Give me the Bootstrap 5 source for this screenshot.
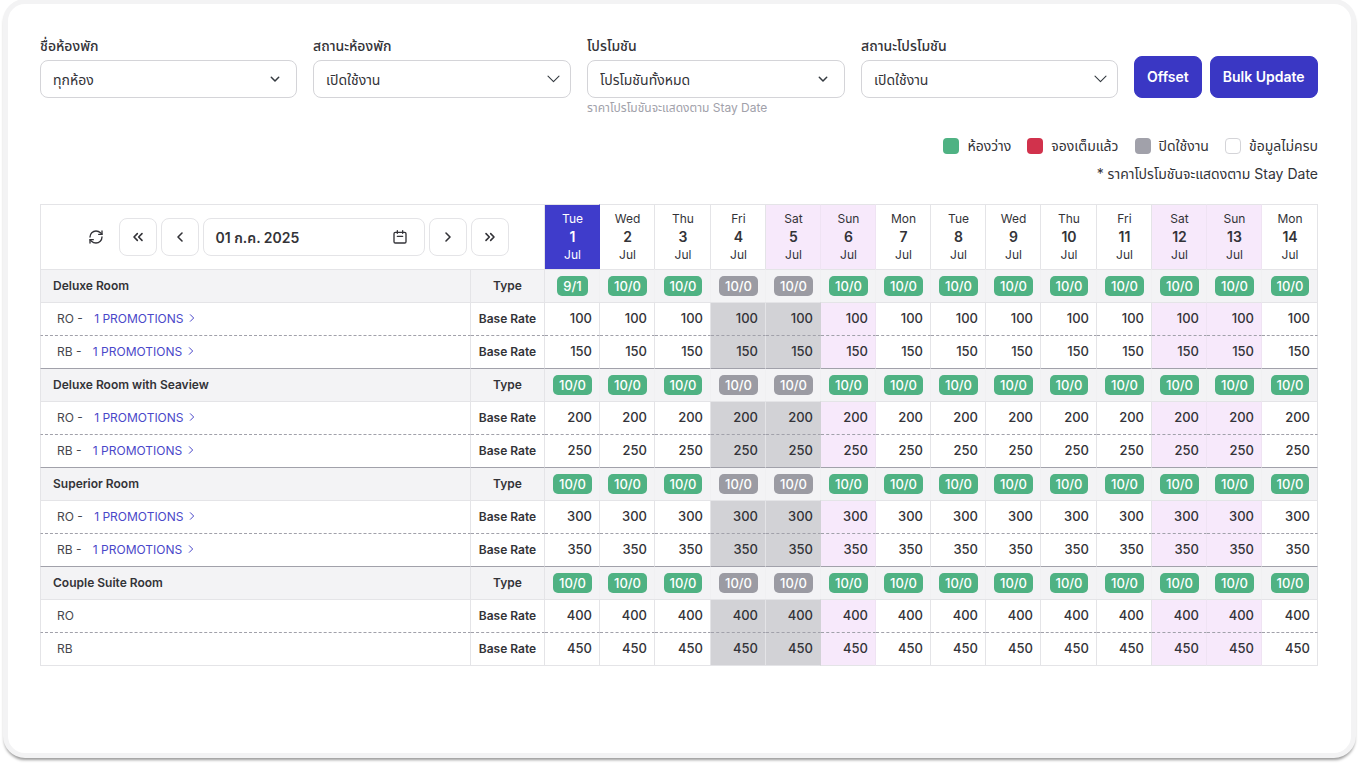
<!DOCTYPE html>
<html lang="th"><head><meta charset="utf-8"><title>Rate calendar</title>
<link rel="stylesheet" href="https://cdn.jsdelivr.net/npm/bootstrap@5.3.0/dist/css/bootstrap.min.css">
<style>
html,body{height:100%;background:#fff;overflow:hidden}
body{font-family:Inter,"Noto Sans Thai","Noto Sans",sans-serif;color:#333338;padding:0 6px 8px 3px}
.frame-box{height:759px;margin-top:-1px;background:#fff;border:5px solid #f3f3f4;border-radius:22px;box-shadow:0 3px 3px -1px rgba(0,0,0,.4);padding:32px 33px 0 32px}
.filter-item{flex:0 0 258px;min-width:0}
.filter-narrow{flex-basis:257px}
.filter-label{font-size:14px;font-weight:500;line-height:20px;margin-bottom:4px;display:block}
.form-select.filter-sel{height:38px;border-radius:8px;border-color:#d4d4d8;font-size:14px;color:#333338;padding:0 30px 0 12px;background-image:url("data:image/svg+xml,%3csvg xmlns='http://www.w3.org/2000/svg' viewBox='0 0 13 8'%3e%3cpath fill='none' stroke='%23343a40' stroke-width='1.1' stroke-linecap='round' stroke-linejoin='round' d='M1 1.2l5.5 5.5 5.5-5.5'/%3e%3c/svg%3e");background-position:right 10px center;background-size:13px 8px}
.form-select.sel-bold{background-image:url("data:image/svg+xml,%3csvg xmlns='http://www.w3.org/2000/svg' viewBox='0 0 12 8'%3e%3cpath fill='none' stroke='%23343a40' stroke-width='1.5' stroke-linecap='round' stroke-linejoin='round' d='M2.3 2.3l3.7 3.7 3.7-3.7'/%3e%3c/svg%3e");background-position:right 15px center;background-size:12px 8px}
.filter-hint{font-size:12px;color:#a1a1aa;line-height:20px}
.btn.act-btn{background:#3a37c4;border-color:#3a37c4;color:#fff;font-size:14px;font-weight:600;height:42px;border-radius:8px;padding:0 12px 2px;margin-top:20px;white-space:nowrap}
.legend-row{font-size:14px;line-height:20px;margin-top:18px}
.swatch{width:16px;height:16px;border-radius:4px;display:inline-block}
.swatch-green{background:#4fb283}
.swatch-red{background:#d1324c}
.swatch-grey{background:#a1a1aa}
.swatch-empty{border:1px solid #d4d4d8}
.note-line{font-size:14px;line-height:20px;margin:8px 0 20px}
.rate-tbl{width:1278px;table-layout:fixed;border-collapse:separate;border-spacing:0;margin:0;font-size:13px}
.cw-name{width:431px}.cw-type{width:74px}.cw-55{width:55px}.cw-56{width:56px}
.rate-tbl td,.rate-tbl th{border:0 solid #e4e4e7;border-width:1px 1px 0 0;padding:0;height:33px;vertical-align:middle;font-weight:500;background:#fff;color:#333338}
.rate-tbl tr>*:first-child{border-left-width:1px}
.rate-tbl tr:last-child>*{border-bottom-width:1px;height:34px}
.rate-tbl .head-ctl{height:65px;font-weight:400}
.ctl-btn{width:38px;height:38px;display:flex;align-items:center;justify-content:center;border:1px solid #e4e4e7;border-radius:8px;background:#fff;color:#333338;padding:0}
.ctl-plain{border-color:transparent}
.date-box{width:222px;height:38px;border:1px solid #e4e4e7;border-radius:8px;font-size:14px;font-weight:600;padding:0 16px 0 12px}
.rate-tbl .day-head{text-align:center;font-size:12px;line-height:16px;font-weight:400;height:65px;padding-left:1px}
.day-head b{display:block;font-size:14px;font-weight:600;line-height:20px}
.rate-tbl .day-today{background:#3f3ccb;color:#fff;border-right-color:#3f3ccb}
.rate-tbl .day-wknd{background:#f7e9fb;border-right-color:#efe3f3}
.rate-tbl .day-off{background:#d2d2d6}
.rate-tbl .day-off+.day-off{border-right-color:#d2d2d6}
.rate-tbl .grp-row>*{background:#f3f3f5;border-top-color:#a1a1aa}
.rate-tbl .grp-first>*{border-top-color:#e4e4e7}
.rate-tbl .grp-name{font-size:12px;font-weight:600;padding-left:12px}
.rate-tbl .type-cell{text-align:center;font-size:12px;font-weight:600}
.rate-tbl .grp-row .bdg-cell{text-align:center;border-right-color:#f0f0f2;padding-left:1px}
.rate-tbl .grp-row .bdg-cell:last-child{border-right-color:#e4e4e7}
.avail{display:inline-block;height:20px;line-height:20px;padding:0 6px;border-radius:5px;background:#4fb283;color:#fff;font-size:13px;font-weight:500}
.avail-off{background:#9b9ba3}
.rate-tbl .plan-name{font-size:12px;font-weight:400;padding-left:16px;color:#46464d}
.promo-lnk{color:#4a47c9;text-decoration:none;margin-left:8px}
.promo-lnk svg{vertical-align:0}
.rate-tbl .num{text-align:right;padding-right:7px}
.rate-tbl .dash-top>*{border-top:1px dashed #a1a1aa}
</style></head><body>
<div class="frame-box">
<div class="d-flex gap-3 align-items-start">
<div class="filter-item filter-narrow"><label class="filter-label">ชื่อห้องพัก</label><select class="form-select filter-sel sel-bold"><option>ทุกห้อง</option></select></div>
<div class="filter-item"><label class="filter-label">สถานะห้องพัก</label><select class="form-select filter-sel"><option>เปิดใช้งาน</option></select></div>
<div class="filter-item"><label class="filter-label">โปรโมชัน</label><select class="form-select filter-sel sel-bold"><option>โปรโมชันทั้งหมด</option></select><div class="filter-hint">ราคาโปรโมชันจะแสดงตาม Stay Date</div></div>
<div class="filter-item filter-narrow"><label class="filter-label">สถานะโปรโมชัน</label><select class="form-select filter-sel"><option>เปิดใช้งาน</option></select></div>
<div class="d-flex gap-2"><button class="btn act-btn">Offset</button><button class="btn act-btn">Bulk Update</button></div>
</div>
<div class="legend-row d-flex justify-content-end align-items-center">
<span class="swatch swatch-green me-2"></span><span class="me-3">ห้องว่าง</span>
<span class="swatch swatch-red me-2"></span><span class="me-3">จองเต็มแล้ว</span>
<span class="swatch swatch-grey me-2"></span><span class="me-3">ปิดใช้งาน</span>
<span class="swatch swatch-empty me-2"></span><span>ข้อมูลไม่ครบ</span>
</div>
<div class="note-line text-end">* ราคาโปรโมชันจะแสดงตาม Stay Date</div>
<table class="rate-tbl">
<colgroup><col class="cw-name"><col class="cw-type"><col class="cw-55"><col class="cw-55"><col class="cw-56"><col class="cw-55"><col class="cw-55"><col class="cw-55"><col class="cw-55"><col class="cw-55"><col class="cw-55"><col class="cw-56"><col class="cw-55"><col class="cw-55"><col class="cw-55"><col class="cw-56"></colgroup>
<tr>
<th colspan="2" class="head-ctl"><div class="d-flex justify-content-center align-items-center gap-1">
<button class="ctl-btn ctl-plain"><svg width="16" height="16" viewBox="0 0 24 24" fill="none" stroke="currentColor" stroke-width="2" stroke-linecap="round" stroke-linejoin="round"><path d="M3 12a9 9 0 0 1 9-9 9.75 9.75 0 0 1 6.74 2.74L21 8"/><path d="M21 3v5h-5"/><path d="M21 12a9 9 0 0 1-9 9 9.75 9.75 0 0 1-6.74-2.74L3 16"/><path d="M8 16H3v5"/></svg></button>
<button class="ctl-btn"><svg width="16" height="16" viewBox="0 0 24 24" fill="none" stroke="currentColor" stroke-width="2.4" stroke-linecap="round" stroke-linejoin="round"><path d="M11 17l-5-5 5-5"/><path d="M18 17l-5-5 5-5"/></svg></button>
<button class="ctl-btn"><svg width="16" height="16" viewBox="0 0 24 24" fill="none" stroke="currentColor" stroke-width="2.4" stroke-linecap="round" stroke-linejoin="round"><path d="M15 18l-6-6 6-6"/></svg></button>
<div class="date-box d-flex align-items-center justify-content-between"><span>01 ก.ค. 2025</span><svg width="16" height="16" viewBox="0 0 24 24" fill="none" stroke="currentColor" stroke-width="2" stroke-linecap="round" stroke-linejoin="round"><rect x="3" y="5" width="18" height="16" rx="2"/><path d="M8 2.5v4M16 2.5v4M8 11h8"/></svg></div>
<button class="ctl-btn"><svg width="16" height="16" viewBox="0 0 24 24" fill="none" stroke="currentColor" stroke-width="2.4" stroke-linecap="round" stroke-linejoin="round"><path d="M9 18l6-6-6-6"/></svg></button>
<button class="ctl-btn"><svg width="16" height="16" viewBox="0 0 24 24" fill="none" stroke="currentColor" stroke-width="2.4" stroke-linecap="round" stroke-linejoin="round"><path d="M6 17l5-5-5-5"/><path d="M13 17l5-5-5-5"/></svg></button>
</div></th>
<th class="day-head day-today">Tue<b>1</b>Jul</th><th class="day-head">Wed<b>2</b>Jul</th><th class="day-head">Thu<b>3</b>Jul</th><th class="day-head">Fri<b>4</b>Jul</th><th class="day-head day-wknd">Sat<b>5</b>Jul</th><th class="day-head day-wknd">Sun<b>6</b>Jul</th><th class="day-head">Mon<b>7</b>Jul</th><th class="day-head">Tue<b>8</b>Jul</th><th class="day-head">Wed<b>9</b>Jul</th><th class="day-head">Thu<b>10</b>Jul</th><th class="day-head">Fri<b>11</b>Jul</th><th class="day-head day-wknd">Sat<b>12</b>Jul</th><th class="day-head day-wknd">Sun<b>13</b>Jul</th><th class="day-head">Mon<b>14</b>Jul</th>
</tr>
<tr class="grp-row grp-first"><td class="grp-name">Deluxe Room</td><td class="type-cell">Type</td><td class="bdg-cell"><span class="avail">9/1</span></td><td class="bdg-cell"><span class="avail">10/0</span></td><td class="bdg-cell"><span class="avail">10/0</span></td><td class="bdg-cell"><span class="avail avail-off">10/0</span></td><td class="bdg-cell"><span class="avail avail-off">10/0</span></td><td class="bdg-cell"><span class="avail">10/0</span></td><td class="bdg-cell"><span class="avail">10/0</span></td><td class="bdg-cell"><span class="avail">10/0</span></td><td class="bdg-cell"><span class="avail">10/0</span></td><td class="bdg-cell"><span class="avail">10/0</span></td><td class="bdg-cell"><span class="avail">10/0</span></td><td class="bdg-cell"><span class="avail">10/0</span></td><td class="bdg-cell"><span class="avail">10/0</span></td><td class="bdg-cell"><span class="avail">10/0</span></td></tr>
<tr><td class="plan-name">RO - <a class="promo-lnk" href="#">1 PROMOTIONS <svg width="10" height="10" viewBox="0 0 24 24" fill="none" stroke="currentColor" stroke-width="2.4" stroke-linecap="round" stroke-linejoin="round"><path d="M8 20l8-8-8-8"/></svg></a></td><td class="type-cell">Base Rate</td><td class="num">100</td><td class="num">100</td><td class="num">100</td><td class="num day-off">100</td><td class="num day-off">100</td><td class="num day-wknd">100</td><td class="num">100</td><td class="num">100</td><td class="num">100</td><td class="num">100</td><td class="num">100</td><td class="num day-wknd">100</td><td class="num day-wknd">100</td><td class="num">100</td></tr>
<tr class="dash-top"><td class="plan-name">RB - <a class="promo-lnk" href="#">1 PROMOTIONS <svg width="10" height="10" viewBox="0 0 24 24" fill="none" stroke="currentColor" stroke-width="2.4" stroke-linecap="round" stroke-linejoin="round"><path d="M8 20l8-8-8-8"/></svg></a></td><td class="type-cell">Base Rate</td><td class="num">150</td><td class="num">150</td><td class="num">150</td><td class="num day-off">150</td><td class="num day-off">150</td><td class="num day-wknd">150</td><td class="num">150</td><td class="num">150</td><td class="num">150</td><td class="num">150</td><td class="num">150</td><td class="num day-wknd">150</td><td class="num day-wknd">150</td><td class="num">150</td></tr>
<tr class="grp-row"><td class="grp-name">Deluxe Room with Seaview</td><td class="type-cell">Type</td><td class="bdg-cell"><span class="avail">10/0</span></td><td class="bdg-cell"><span class="avail">10/0</span></td><td class="bdg-cell"><span class="avail">10/0</span></td><td class="bdg-cell"><span class="avail avail-off">10/0</span></td><td class="bdg-cell"><span class="avail avail-off">10/0</span></td><td class="bdg-cell"><span class="avail">10/0</span></td><td class="bdg-cell"><span class="avail">10/0</span></td><td class="bdg-cell"><span class="avail">10/0</span></td><td class="bdg-cell"><span class="avail">10/0</span></td><td class="bdg-cell"><span class="avail">10/0</span></td><td class="bdg-cell"><span class="avail">10/0</span></td><td class="bdg-cell"><span class="avail">10/0</span></td><td class="bdg-cell"><span class="avail">10/0</span></td><td class="bdg-cell"><span class="avail">10/0</span></td></tr>
<tr><td class="plan-name">RO - <a class="promo-lnk" href="#">1 PROMOTIONS <svg width="10" height="10" viewBox="0 0 24 24" fill="none" stroke="currentColor" stroke-width="2.4" stroke-linecap="round" stroke-linejoin="round"><path d="M8 20l8-8-8-8"/></svg></a></td><td class="type-cell">Base Rate</td><td class="num">200</td><td class="num">200</td><td class="num">200</td><td class="num day-off">200</td><td class="num day-off">200</td><td class="num day-wknd">200</td><td class="num">200</td><td class="num">200</td><td class="num">200</td><td class="num">200</td><td class="num">200</td><td class="num day-wknd">200</td><td class="num day-wknd">200</td><td class="num">200</td></tr>
<tr class="dash-top"><td class="plan-name">RB - <a class="promo-lnk" href="#">1 PROMOTIONS <svg width="10" height="10" viewBox="0 0 24 24" fill="none" stroke="currentColor" stroke-width="2.4" stroke-linecap="round" stroke-linejoin="round"><path d="M8 20l8-8-8-8"/></svg></a></td><td class="type-cell">Base Rate</td><td class="num">250</td><td class="num">250</td><td class="num">250</td><td class="num day-off">250</td><td class="num day-off">250</td><td class="num day-wknd">250</td><td class="num">250</td><td class="num">250</td><td class="num">250</td><td class="num">250</td><td class="num">250</td><td class="num day-wknd">250</td><td class="num day-wknd">250</td><td class="num">250</td></tr>
<tr class="grp-row"><td class="grp-name">Superior Room</td><td class="type-cell">Type</td><td class="bdg-cell"><span class="avail">10/0</span></td><td class="bdg-cell"><span class="avail">10/0</span></td><td class="bdg-cell"><span class="avail">10/0</span></td><td class="bdg-cell"><span class="avail avail-off">10/0</span></td><td class="bdg-cell"><span class="avail avail-off">10/0</span></td><td class="bdg-cell"><span class="avail">10/0</span></td><td class="bdg-cell"><span class="avail">10/0</span></td><td class="bdg-cell"><span class="avail">10/0</span></td><td class="bdg-cell"><span class="avail">10/0</span></td><td class="bdg-cell"><span class="avail">10/0</span></td><td class="bdg-cell"><span class="avail">10/0</span></td><td class="bdg-cell"><span class="avail">10/0</span></td><td class="bdg-cell"><span class="avail">10/0</span></td><td class="bdg-cell"><span class="avail">10/0</span></td></tr>
<tr><td class="plan-name">RO - <a class="promo-lnk" href="#">1 PROMOTIONS <svg width="10" height="10" viewBox="0 0 24 24" fill="none" stroke="currentColor" stroke-width="2.4" stroke-linecap="round" stroke-linejoin="round"><path d="M8 20l8-8-8-8"/></svg></a></td><td class="type-cell">Base Rate</td><td class="num">300</td><td class="num">300</td><td class="num">300</td><td class="num day-off">300</td><td class="num day-off">300</td><td class="num day-wknd">300</td><td class="num">300</td><td class="num">300</td><td class="num">300</td><td class="num">300</td><td class="num">300</td><td class="num day-wknd">300</td><td class="num day-wknd">300</td><td class="num">300</td></tr>
<tr class="dash-top"><td class="plan-name">RB - <a class="promo-lnk" href="#">1 PROMOTIONS <svg width="10" height="10" viewBox="0 0 24 24" fill="none" stroke="currentColor" stroke-width="2.4" stroke-linecap="round" stroke-linejoin="round"><path d="M8 20l8-8-8-8"/></svg></a></td><td class="type-cell">Base Rate</td><td class="num">350</td><td class="num">350</td><td class="num">350</td><td class="num day-off">350</td><td class="num day-off">350</td><td class="num day-wknd">350</td><td class="num">350</td><td class="num">350</td><td class="num">350</td><td class="num">350</td><td class="num">350</td><td class="num day-wknd">350</td><td class="num day-wknd">350</td><td class="num">350</td></tr>
<tr class="grp-row"><td class="grp-name">Couple Suite Room</td><td class="type-cell">Type</td><td class="bdg-cell"><span class="avail">10/0</span></td><td class="bdg-cell"><span class="avail">10/0</span></td><td class="bdg-cell"><span class="avail">10/0</span></td><td class="bdg-cell"><span class="avail avail-off">10/0</span></td><td class="bdg-cell"><span class="avail avail-off">10/0</span></td><td class="bdg-cell"><span class="avail">10/0</span></td><td class="bdg-cell"><span class="avail">10/0</span></td><td class="bdg-cell"><span class="avail">10/0</span></td><td class="bdg-cell"><span class="avail">10/0</span></td><td class="bdg-cell"><span class="avail">10/0</span></td><td class="bdg-cell"><span class="avail">10/0</span></td><td class="bdg-cell"><span class="avail">10/0</span></td><td class="bdg-cell"><span class="avail">10/0</span></td><td class="bdg-cell"><span class="avail">10/0</span></td></tr>
<tr><td class="plan-name">RO</td><td class="type-cell">Base Rate</td><td class="num">400</td><td class="num">400</td><td class="num">400</td><td class="num day-off">400</td><td class="num day-off">400</td><td class="num day-wknd">400</td><td class="num">400</td><td class="num">400</td><td class="num">400</td><td class="num">400</td><td class="num">400</td><td class="num day-wknd">400</td><td class="num day-wknd">400</td><td class="num">400</td></tr>
<tr class="dash-top"><td class="plan-name">RB</td><td class="type-cell">Base Rate</td><td class="num">450</td><td class="num">450</td><td class="num">450</td><td class="num day-off">450</td><td class="num day-off">450</td><td class="num day-wknd">450</td><td class="num">450</td><td class="num">450</td><td class="num">450</td><td class="num">450</td><td class="num">450</td><td class="num day-wknd">450</td><td class="num day-wknd">450</td><td class="num">450</td></tr>
</table>
</div>
<script src="https://cdn.jsdelivr.net/npm/bootstrap@5.3.0/dist/js/bootstrap.bundle.min.js"></script>
</body></html>
